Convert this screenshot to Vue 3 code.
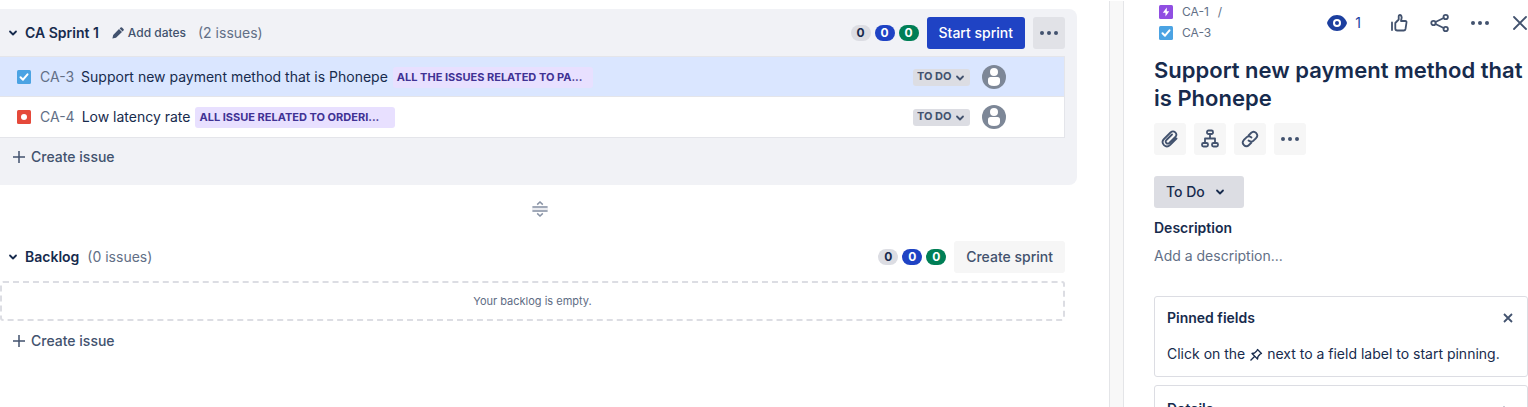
<script setup>
import { ref } from 'vue'

const issues = ref([
  { key: 'CA-3', type: 'task', title: 'Support new payment method that is Phonepe', epic: 'All the issues related to pa...', status: 'To Do', selected: true },
  { key: 'CA-4', type: 'bug', title: 'Low latency rate', epic: 'All issue related to orderi...', status: 'To Do', selected: false },
])

const counters = [
  { tone: 'todo', value: 0 },
  { tone: 'progress', value: 0 },
  { tone: 'done', value: 0 },
]
</script>

<template>
  <div class="page">
    <main class="board">
      <section class="sprint">
        <header class="bar">
          <button class="toggle" aria-label="Collapse CA Sprint 1">
            <svg width="10" height="10" viewBox="0 0 10 10"><path d="M2 3.5 5 6.5 8 3.5" /></svg>
          </button>
          <h2>CA Sprint 1</h2>
          <button class="dates">
            <svg width="12" height="12" viewBox="0 0 12 12"><path d="M.4 11.600 1.200 8 7 2 10 5 4 10.800zM7.600 1.400 8.600.5q.7-.6 1.400 0L11.500 2q.6.700 0 1.400L10.600 4.400z" /></svg>
            Add dates
          </button>
          <span class="total">(2 issues)</span>
          <div class="actions">
            <div class="counters">
              <span v-for="c in counters" :key="c.tone" class="count" :class="c.tone">{{ c.value }}</span>
            </div>
            <button class="btn primary">Start sprint</button>
            <button class="btn square muted" aria-label="More sprint actions">
              <svg width="20" height="6" viewBox="0 0 20 6"><circle cx="3" cy="3" r="2" /><circle cx="10" cy="3" r="2" /><circle cx="17" cy="3" r="2" /></svg>
            </button>
          </div>
        </header>

        <ul class="issues">
          <li v-for="issue in issues" :key="issue.key" :class="{ selected: issue.selected }">
            <svg class="type" width="14" height="14" viewBox="0 0 14 14">
              <template v-if="issue.type === 'task'">
                <rect width="14" height="14" rx="1.500" fill="#4ba3e3" />
                <path d="M3.500 7.200 6 9.700 10.500 4.300" fill="none" stroke="#fff" stroke-width="2" stroke-linecap="round" stroke-linejoin="round" />
              </template>
              <template v-else>
                <rect width="14" height="14" rx="1.500" fill="#e5493a" />
                <circle cx="7" cy="7" r="3" fill="#fff" />
              </template>
            </svg>
            <a class="key" href="#">{{ issue.key }}</a>
            <span class="title">{{ issue.title }}</span>
            <span class="epic">{{ issue.epic }}</span>
            <span class="status">
              <select :aria-label="`Status of ${issue.key}`"><option>{{ issue.status }}</option></select>
              <svg width="10" height="10" viewBox="0 0 10 10"><path d="M2 4.500 5 7.500 8 4.500" /></svg>
            </span>
            <svg class="avatar" width="24" height="24" viewBox="0 0 24 24" role="img" aria-label="Unassigned">
              <circle cx="12" cy="12" r="12" fill="#7d8797" />
              <circle cx="12" cy="7" r="4" fill="#fff" />
              <path d="M6 14.500Q6 12 8.500 12h7Q18 12 18 14.500V17q0 4-6 4t-6-4z" fill="#fff" />
            </svg>
          </li>
        </ul>
        <button class="create">
          <svg width="14" height="14" viewBox="0 0 14 14"><path d="M7 1v12M1 7h12" /></svg>
          Create issue
        </button>
      </section>

      <div class="handle">
        <svg width="16" height="16" viewBox="0 0 16 16">
          <rect y="5" width="16" height="6" fill="#ebecf0" />
          <path d="M.5 6h15M.5 10h15M5.200 3.600 8 1 10.800 3.600M5.200 12.400 8 15 10.800 12.400" />
        </svg>
      </div>

      <section class="backlog">
        <header class="bar">
          <button class="toggle" aria-label="Collapse Backlog">
            <svg width="10" height="10" viewBox="0 0 10 10"><path d="M2 3.500 5 6.500 8 3.500" /></svg>
          </button>
          <h2>Backlog</h2>
          <span class="total near">(0 issues)</span>
          <div class="actions">
            <div class="counters">
              <span v-for="c in counters" :key="c.tone" class="count" :class="c.tone">{{ c.value }}</span>
            </div>
            <button class="btn subtle">Create sprint</button>
          </div>
        </header>
        <p class="empty">Your backlog is empty.</p>
        <button class="create">
          <svg width="14" height="14" viewBox="0 0 14 14"><path d="M7 1v12M1 7h12" /></svg>
          Create issue
        </button>
      </section>
    </main>

    <div class="splitter"></div>

    <aside class="detail">
      <div class="top">
        <nav class="crumbs">
          <div>
            <svg width="14" height="14" viewBox="0 0 14 14"><rect width="14" height="14" rx="1.500" fill="#904ee2" /><path d="M7.800 2.500 3.800 7.700h2.700v3.800l3.700-5.200H7.800z" fill="#fff" /></svg>
            <a href="#">CA-1</a><span>/</span>
          </div>
          <div>
            <svg width="14" height="14" viewBox="0 0 14 14"><rect width="14" height="14" rx="1.500" fill="#4ba3e3" /><path d="M3.500 7.200 6 9.700 10.500 4.300" fill="none" stroke="#fff" stroke-width="2" stroke-linecap="round" stroke-linejoin="round" /></svg>
            <a href="#">CA-3</a>
          </div>
        </nav>
        <div class="tools">
          <button class="watch" aria-label="Watchers: 1">
            <svg width="20" height="16" viewBox="0 0 20 16"><path d="M10 0C15 0 18.500 3.500 20 8 18.500 12.500 15 16 10 16S1.500 12.500 0 8C1.500 3.500 5 0 10 0z" fill="#1c3f9f" /><circle cx="10" cy="8" r="4" fill="#fff" /><circle cx="10" cy="8" r="2" fill="#1c3f9f" /></svg>
            1
          </button>
          <button class="tool" aria-label="Like">
            <svg width="18" height="18" viewBox="1 0 18 18"><path d="M2 8.500v7.500M5.300 9 8.700 5.500V2.500Q8.700 1 10 1t1.700 2.500L11 7h4.200q1.500 0 1.300 1.500l-1 6.500q-.3 1.500-1.800 1.500H7.300q-2 0-2-2z" /></svg>
          </button>
          <button class="tool" aria-label="Share">
            <svg width="20" height="20" viewBox="0 0 20 20"><path d="M5.500 9 13.700 5M5.500 11 13.700 15" /><circle cx="3.500" cy="10" r="2.200" /><circle cx="15.700" cy="4" r="2.200" /><circle cx="15.700" cy="16" r="2.200" /></svg>
          </button>
          <button class="tool dots" aria-label="Actions">
            <svg width="20" height="6" viewBox="0 0 20 6"><circle cx="3" cy="3" r="2" /><circle cx="10" cy="3" r="2" /><circle cx="17" cy="3" r="2" /></svg>
          </button>
          <button class="tool" aria-label="Close">
            <svg width="16" height="16" viewBox="0 0 16 16"><path d="M2 2 14 14M14 2 2 14" /></svg>
          </button>
        </div>
      </div>

      <h1>Support new payment method that is Phonepe</h1>

      <div class="quick">
        <button class="btn square subtle" aria-label="Attach">
          <svg width="20" height="20" viewBox="0 0 20 20"><path d="M16.500 9.500 10.200 15.900Q7 19 4 16.200 1 13 4 10L10.500 3.500Q13 1.300 15.300 3.400 17.500 5.700 15.300 8L9.300 14Q7.700 15.300 6.300 14 5 12.500 6.400 11L12 5.500" /></svg>
        </button>
        <button class="btn square subtle" aria-label="Add child issue">
          <svg width="20" height="20" viewBox="0 0 20 20"><rect x="7" y="1.500" width="6" height="3.500" rx="1.500" /><rect x="2" y="14" width="6" height="3.500" rx="1.500" /><rect x="12" y="14" width="6" height="3.500" rx="1.500" /><path d="M10 5v4.500M5 14V9.500h10V14" /></svg>
        </button>
        <button class="btn square subtle" aria-label="Link issue">
          <svg width="20" height="20" viewBox="0 0 20 20"><path d="M8.500 6.500 11 4Q13.500 1.500 16.200 4 18.500 6.500 16.200 9L13.500 11.700Q11 13.500 8.500 11.500M11.500 13.500 9 16Q6.500 18.500 3.800 16 1.500 13.500 3.800 11L6.500 8.300Q9 6.500 11.500 8.500" /></svg>
        </button>
        <button class="btn square subtle dots" aria-label="More">
          <svg width="20" height="6" viewBox="0 0 20 6"><circle cx="3" cy="3" r="2" /><circle cx="10" cy="3" r="2" /><circle cx="17" cy="3" r="2" /></svg>
        </button>
      </div>

      <span class="state">
        <select aria-label="Status"><option>To Do</option></select>
        <svg width="10" height="10" viewBox="0 0 10 10"><path d="M2 3.500 5 6.500 8 3.500" /></svg>
      </span>

      <h3>Description</h3>
      <p class="placeholder">Add a description...</p>

      <section class="card">
        <div class="cardhead">
          <h3>Pinned fields</h3>
          <button aria-label="Dismiss pinned fields">
            <svg width="12" height="12" viewBox="0 0 12 12"><path d="M2 2 10 10M10 2 2 10" /></svg>
          </button>
        </div>
        <p>
          Click on the
          <svg class="pin" width="14" height="14" viewBox="0 0 14 14"><path d="M8.500 1.500 12.500 5.500 11 6.300 9 8.500 8.500 11 3 5.500 5.500 5 7.700 3zM5.500 8.500 1.500 12.500" /></svg>
          next to a field label to start pinning.
        </p>
      </section>
      <section class="card details">
        <div class="cardhead">
          <h3>Details</h3>
          <button aria-label="Collapse details">
            <svg width="12" height="12" viewBox="0 0 12 12"><path d="M3 7.500 6 4.500 9 7.500" /></svg>
          </button>
        </div>
      </section>
    </aside>
  </div>
</template>

<style>
body {
  background: #fff;
}
</style>

<style scoped>
.page {
  display: grid;
  grid-template-columns: minmax(0, 1fr) 15px 404px;
  height: 100vh;
  overflow: hidden;
  color: #172b4d;
  font: 14px/20px Inter, "Liberation Sans", sans-serif;
}
.page * {
  box-sizing: border-box;
}
h1, h2, h3, p, ul {
  margin: 0;
  padding: 0;
}
h2, h3 {
  font-size: 14px;
  line-height: 20px;
  font-weight: 600;
}
a {
  color: inherit;
  text-decoration: none;
}
button, select {
  margin: 0;
  padding: 0;
  border: 0;
  background: none;
  color: #42526e;
  font: inherit;
  cursor: pointer;
}
svg {
  display: block;
  flex: none;
}
.board {
  padding: 9px 32px 0 0;
}
.sprint {
  padding: 8px 12px 16px 0;
  border-radius: 0 8px 8px 0;
  background: #f1f2f6;
}
.bar {
  display: flex;
  align-items: center;
  height: 32px;
  padding-left: 8px;
}
.toggle {
  margin-right: 7px;
}
.toggle path, .status path, .state path {
  fill: none;
  stroke: #172b4d;
  stroke-width: 1.800;
  stroke-linecap: round;
  stroke-linejoin: round;
}
.dates {
  display: flex;
  align-items: center;
  gap: 4px;
  margin-left: 13px;
  font-size: 12px;
  font-weight: 500;
}
.dates svg {
  fill: #42526e;
}
.total {
  margin-left: 12px;
  color: #626f86;
}
.total.near {
  margin-left: 8px;
}
.actions {
  display: flex;
  align-items: center;
  gap: 8px;
  margin-left: auto;
}
.counters {
  display: flex;
  gap: 4px;
}
.count {
  width: 20px;
  border-radius: 8px;
  font-size: 12px;
  line-height: 16px;
  font-weight: 700;
  text-align: center;
}
.todo {
  background: #dcdde3;
}
.progress {
  background: #1f43c4;
  color: #fff;
}
.done {
  background: #007f56;
  color: #fff;
}
.btn {
  height: 32px;
  padding: 0 12px;
  border-radius: 3px;
  font-weight: 500;
}
.square {
  display: grid;
  place-items: center;
  width: 32px;
  padding: 0;
}
.primary {
  background: #1f43c4;
  color: #fff;
}
.muted {
  background: #e1e2e7;
}
.subtle {
  background: #f6f6f6;
}
.muted svg, .dots svg {
  fill: #42526e;
}
.issues {
  margin-top: 7px;
  border: solid #e4e5ea;
  border-width: 1px 1px 0 0;
  list-style: none;
}
.issues li {
  display: flex;
  align-items: center;
  padding: 8px 58px 7px 17px;
  border-bottom: 1px solid #e4e5ea;
  background: #fff;
}
.issues li:last-child {
  padding-bottom: 8px;
}
.issues .selected {
  background: #dae6ff;
}
.key {
  margin: 0 7px 0 9px;
  color: #626f86;
}
.epic {
  width: 200px;
  margin-left: 5px;
  padding: 0 4px;
  border-radius: 3px;
  background: #e8e0ff;
  color: #403294;
  font-size: 11px;
  line-height: 21px;
  font-weight: 700;
  text-transform: uppercase;
  white-space: nowrap;
}
.status, .state {
  display: grid;
  align-items: center;
  border-radius: 3px;
  background: #dcdde3;
}
.status select, .state select {
  grid-area: 1 / 1;
  appearance: none;
}
.status svg, .state svg {
  grid-area: 1 / 1;
  justify-self: end;
  pointer-events: none;
}
.status {
  width: 57px;
  margin: 0 12px 0 auto;
}
.status select {
  height: 17px;
  padding: 0 0 2px 4px;
  font-size: 11px;
  line-height: 15px;
  font-weight: 700;
  text-transform: uppercase;
}
.status svg {
  margin-right: 5px;
}
.status path {
  stroke: #42526e;
}
.create {
  display: flex;
  align-items: center;
  gap: 5px;
  margin: 9px 0 2px 12px;
  font-weight: 500;
}
.create path {
  stroke: #42526e;
  stroke-width: 1.5;
}
.handle {
  display: grid;
  place-items: center;
  height: 48px;
  padding-left: 3px;
}
.handle path {
  fill: none;
  stroke: #8993a5;
  stroke-width: 1.5;
}
.backlog {
  padding: 8px 12px 0 0;
}
.empty {
  margin-top: 8px;
  border: 2px dashed #dcdde3;
  border-radius: 3px;
  color: #5e6c84;
  font-size: 11px;
  line-height: 36px;
  text-align: center;
}
.backlog .create {
  margin-top: 10px;
}
.splitter {
  margin-top: 1px;
  border: solid #e4e5e8;
  border-width: 0 1px;
  background: #f8f8f8;
}
.detail {
  padding: 1px 0 0 30px;
}
.top {
  display: flex;
  justify-content: space-between;
  align-items: flex-start;
}
.crumbs {
  padding-left: 5px;
  color: #626f86;
  font-size: 12px;
}
.crumbs div {
  display: flex;
  align-items: center;
  gap: 9px;
  height: 21px;
}
.tools {
  display: flex;
  align-items: center;
  padding-top: 6px;
}
.watch {
  display: flex;
  align-items: center;
  gap: 8px;
  margin-right: 15px;
  color: #1c3f9f;
}
.tool {
  display: grid;
  place-items: center;
  width: 32px;
  height: 32px;
  margin-left: 8px;
}
.tool path, .tool circle, .quick path, .quick rect {
  fill: none;
  stroke: #42526e;
  stroke-width: 1.800;
  stroke-linecap: round;
  stroke-linejoin: round;
}
.tool.dots circle {
  fill: #42526e;
  stroke: none;
}
.tool:last-child {
  margin-right: -8px;
}
h1 {
  margin-top: 13px;
  font-size: 22px;
  line-height: 28px;
  font-weight: 600;
}
.quick {
  display: flex;
  gap: 8px;
  margin-top: 11px;
}
.state {
  width: 90px;
  margin-top: 21px;
}
.state select {
  height: 32px;
  padding-left: 12px;
  color: #172b4d;
  font-weight: 500;
}
.state svg {
  margin-right: 19px;
}
.state + h3 {
  margin-top: 10px;
}
.placeholder {
  margin: 8px 0 30px;
  color: #626f86;
}
.card {
  margin-bottom: 8px;
  padding: 11px 12px 12px;
  border: 1px solid #dcdde3;
  border-radius: 3px;
}
.details {
  padding-top: 13px;
}
.cardhead {
  display: flex;
  align-items: center;
  justify-content: space-between;
}
.cardhead button {
  margin-right: 1px;
}
.details button {
  margin-right: 5px;
}
.cardhead path {
  fill: none;
  stroke: #42526e;
  stroke-width: 1.800;
}
.card p {
  margin-top: 16px;
}
.pin {
  display: inline-block;
  vertical-align: -3px;
}
.pin path {
  fill: none;
  stroke: #172b4d;
  stroke-width: 1.300;
  stroke-linejoin: round;
}
</style>
